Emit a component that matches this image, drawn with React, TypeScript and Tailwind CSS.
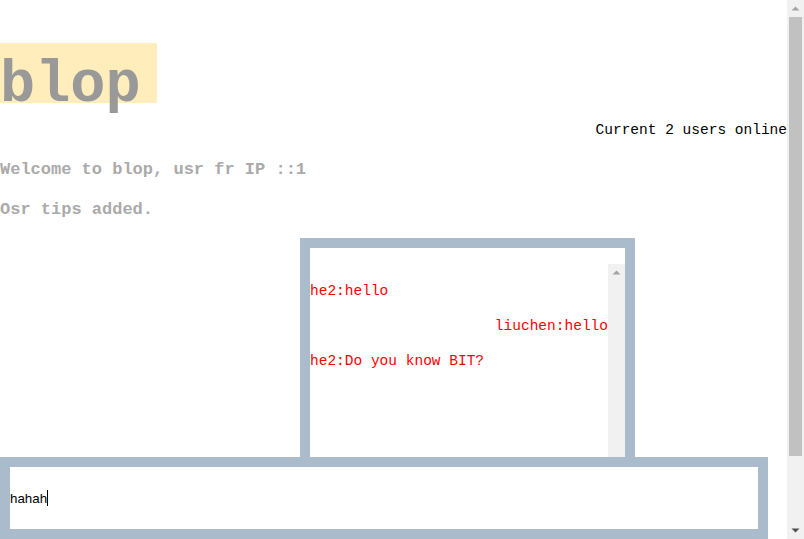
import React from 'react';

const messages = [
  { from: 'he2', text: 'hello', mine: false },
  { from: 'liuchen', text: 'hello', mine: true },
  { from: 'he2', text: 'Do you know BIT?', mine: false },
];

const mono = "font-['Liberation_Mono',Consolas,monospace]";

const UpArrow = ({ color }: { color: string }) => (
  <svg width="17" height="17" viewBox="0 0 17 17">
    <path d="M4.5 10.5 L8.5 6.5 L12.5 10.5 Z" fill={color} />
  </svg>
);

const DownArrow = ({ color }: { color: string }) => (
  <svg width="17" height="17" viewBox="0 0 17 17">
    <path d="M4.5 6.5 L8.5 10.5 L12.5 6.5 Z" fill={color} />
  </svg>
);

const App: React.FC = () => {
  return (
    <div className={`${mono} flex h-[539px] overflow-hidden bg-white`}>
      <main className="flex-1 min-w-0">
        <div className="pt-[43px]">
          <div className="w-[157px] h-[60px] bg-[#ffeebb] text-[58.6px] leading-[86px] font-bold text-[#999999]">
            blop
          </div>
        </div>

        <p className="mt-[18px] text-right text-[14.5px] leading-[19px] text-black">Current 2 users online</p>

        <h3 className="mt-[19px] text-[17px] leading-[22px] font-bold text-[#aaaaaa]">
          Welcome to blop, usr fr IP ::1
        </h3>
        <h3 className="mt-[18px] text-[17px] leading-[22px] font-bold text-[#aaaaaa]">Osr tips added.</h3>

        <div className="mt-[17px] ml-[300px] w-[335px] h-[383px] border-[10px] border-[#aabbcc] bg-white pt-4">
          <div className="flex h-full">
            <div className="flex-1 pt-[2px]">
              {messages.map((m, i) => (
                <p
                  key={i}
                  className={`my-4 text-[14.5px] leading-[19px] text-[#ff0000] ${m.mine ? 'text-right' : 'text-left'}`}
                >
                  {m.from}:{m.text}
                </p>
              ))}
            </div>
            <div className="w-[17px] bg-[#f1f1f1]">
              <UpArrow color="#a3a3a3" />
            </div>
          </div>
        </div>
      </main>

      {/* page scrollbar */}
      <aside className="w-[17px] flex flex-col bg-[#f1f1f1]">
        <UpArrow color="#a3a3a3" />
        <div className="mx-[2px] h-[439px] bg-[#c1c1c1]" />
        <div className="flex-1" />
        <DownArrow color="#505050" />
      </aside>

      {/* input bar pinned to the bottom, over the chat box */}
      <div className="fixed bottom-0 left-0 w-[768px] h-[82px] border-[10px] border-[#aabbcc] bg-white">
        <div className="relative w-full h-full">
          <input
            defaultValue="hahah"
            className="w-full h-full outline-none bg-white text-black font-['Liberation_Sans',Arial,sans-serif] text-[13.33px]"
          />
          <span className="absolute left-[37px] top-[23px] h-[16px] w-px bg-black" />
        </div>
      </div>
    </div>
  );
};

export default App;
